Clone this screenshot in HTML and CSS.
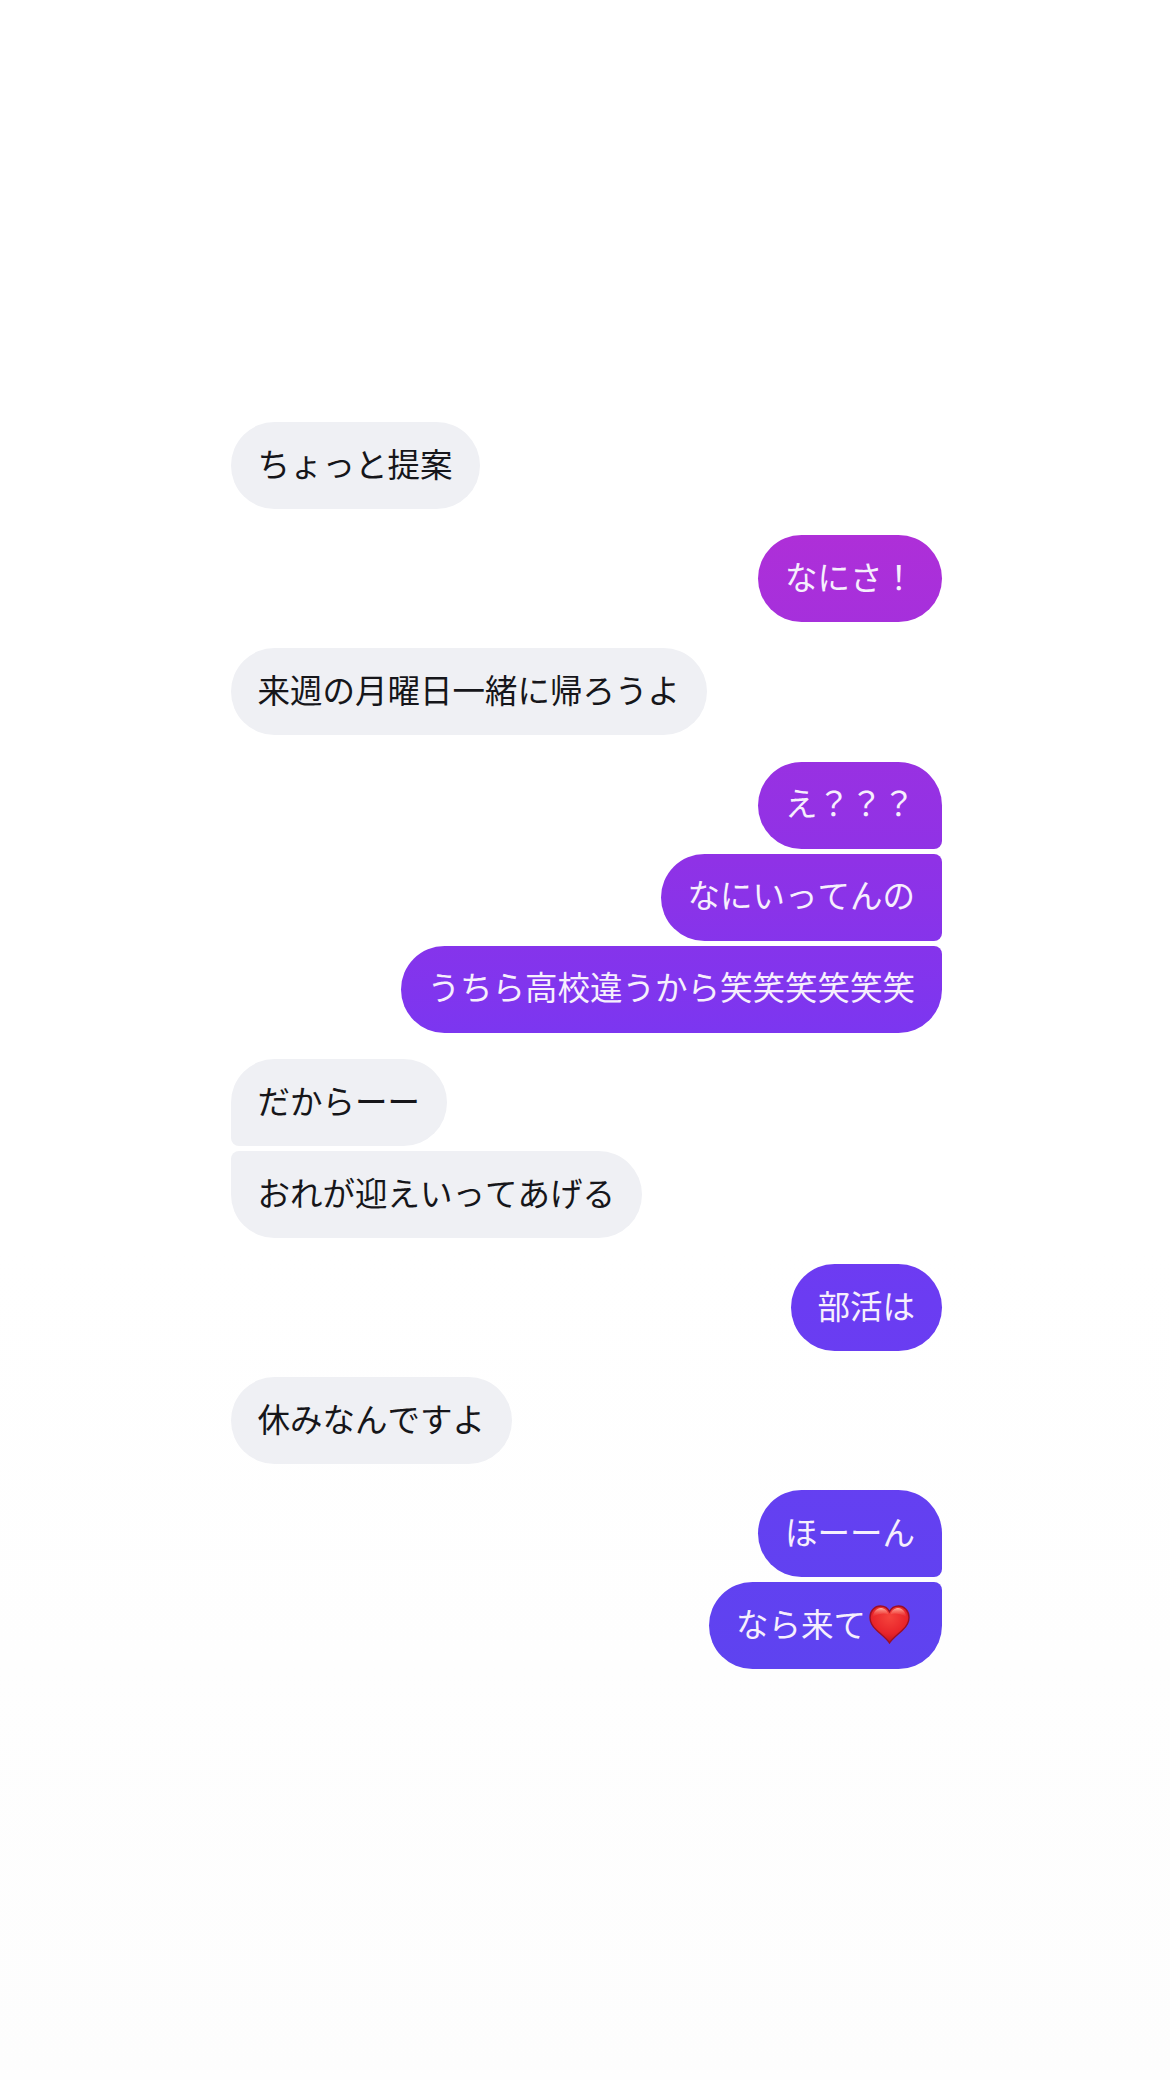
FILE: index.html
```html
<!DOCTYPE html>
<html lang="ja">
<head>
    <meta charset="UTF-8">
    <meta name="viewport" content="width=device-width, initial-scale=1.0">
    <title>Chat</title>
    <link rel="stylesheet" href="styles.css">
</head>
<body>
    <main class="chat">
        <div class="group theirs">
            <div class="bubble">ちょっと提案</div>
        </div>
        <div class="group mine">
            <div class="bubble">なにさ！</div>
        </div>
        <div class="group theirs">
            <div class="bubble">来週の月曜日一緒に帰ろうよ</div>
        </div>
        <div class="group mine">
            <div class="bubble">え？？？</div>
            <div class="bubble">なにいってんの</div>
            <div class="bubble">うちら高校違うから笑笑笑笑笑笑</div>
        </div>
        <div class="group theirs">
            <div class="bubble">だからーー</div>
            <div class="bubble">おれが迎えいってあげる</div>
        </div>
        <div class="group mine">
            <div class="bubble">部活は</div>
        </div>
        <div class="group theirs">
            <div class="bubble">休みなんですよ</div>
        </div>
        <div class="group mine">
            <div class="bubble">ほーーん</div>
            <div class="bubble">なら来て<svg class="heart" viewBox="0 0 41 39" aria-hidden="true">
                <defs>
                    <radialGradient id="heart-fill" cx="0.5" cy="0.3" r="0.75">
                        <stop offset="0" stop-color="#f5443c"/>
                        <stop offset="0.6" stop-color="#e8242a"/>
                        <stop offset="1" stop-color="#b40f1c"/>
                    </radialGradient>
                    <linearGradient id="heart-shine" x1="0" y1="0" x2="0" y2="1">
                        <stop offset="0" stop-color="#ffb3a3"/>
                        <stop offset="1" stop-color="#f8574a" stop-opacity="0"/>
                    </linearGradient>
                </defs>
                <path d="M20.5 38C18 33.8 12.5 29.8 7.4 25C3.4 21.2 1 17.4 1 12.4C1 5.8 5.8 1 11.4 1C15.4 1 18.8 3 20.5 6.6C22.2 3 25.6 1 29.6 1C35.2 1 40 5.8 40 12.4C40 17.4 37.6 21.2 33.6 25C28.5 29.8 23 33.8 20.5 38Z" fill="url(#heart-fill)" stroke="#9c0f24" stroke-width="1.4"/>
                <path d="M3.6 12C4.4 6.8 8 3 11.6 3C15.2 3 18.4 5.4 19.4 9.4C16 8 10.6 8.2 3.6 12Z" fill="url(#heart-shine)"/>
                <path d="M37.4 12C36.6 6.8 33 3 29.4 3C25.8 3 22.6 5.4 21.6 9.4C25 8 30.4 8.2 37.4 12Z" fill="url(#heart-shine)"/>
            </svg></div>
        </div>
    </main>
</body>
</html>
```

FILE: styles.css
```css
body {
    margin: 0;
    min-height: 2080px;
    background: linear-gradient(180deg, #ffffff 60%, #fdfdfd 100%);
    font-family: "Noto Sans CJK JP", "Noto Sans", sans-serif;
}
.chat {
    box-sizing: border-box;
    width: 711px;
    margin-left: 231px;
    padding-top: 422px;
    display: flex;
    flex-direction: column;
    gap: 26.2px;
}
.group {
    display: flex;
    flex-direction: column;
    gap: 5px;
}
.theirs {
    align-items: flex-start;
}
.mine {
    align-items: flex-end;
}
.bubble {
    display: flex;
    align-items: center;
    box-sizing: border-box;
    height: 87px;
    padding: 0 27px 5px 26.5px;
    border-radius: 43.5px;
    font-size: 32.5px;
    font-kerning: none;
    line-height: 1;
    white-space: nowrap;
}
.theirs .bubble {
    background: #eff0f4;
    color: #16161a;
}
.mine .bubble {
    color: #f6effd;
    background: linear-gradient(180deg, #ae2fd8 535px, #8f32e6 860px, #7c36f0 1030px, #6b3cf2 1300px, #5e43f0 1670px) fixed;
}
.theirs .bubble:not(:last-child) {
    border-bottom-left-radius: 8px;
}
.theirs .bubble:not(:first-child) {
    border-top-left-radius: 8px;
}
.mine .bubble:not(:last-child) {
    border-bottom-right-radius: 8px;
}
.mine .bubble:not(:first-child) {
    border-top-right-radius: 8px;
}
.heart {
    width: 41px;
    height: 39px;
    margin: 3px 5px 0 3px;
}
```
